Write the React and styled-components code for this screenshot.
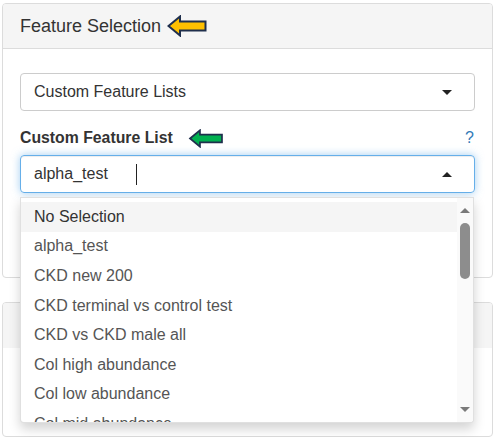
import React from 'react';
import styled, { createGlobalStyle } from 'styled-components';

const GlobalStyle = createGlobalStyle`
  html, body {
    margin: 0;
    padding: 0;
    background: #fff;
  }
  body {
    font-family: "Liberation Sans", Arial, sans-serif;
    color: #333;
  }
`;

const Page = styled.div`
  position: relative;
  padding: 3px 0 0 2px;
  width: 491px;
`;

const Panel = styled.section`
  border: 1px solid #dcdcdc;
  border-radius: 4px;
  background: #fff;
  margin-bottom: ${(p) => p.gap || 0}px;
  height: ${(p) => (p.height ? `${p.height}px` : 'auto')};
  box-sizing: border-box;
  overflow: hidden;
`;

const PanelHeading = styled.div`
  display: flex;
  align-items: center;
  gap: 6px;
  height: 44px;
  padding: 0 17px;
  background: #f5f5f5;
  border-bottom: 1px solid ${(p) => (p.plain ? '#f5f5f5' : '#dcdcdc')};
  font-size: 18px;
  color: #333;
`;

const PanelBody = styled.div`
  display: flex;
  flex-direction: column;
  padding: 24px 17px 84px;
`;

const Select = styled.div`
  display: flex;
  align-items: center;
  justify-content: space-between;
  height: 38px;
  box-sizing: border-box;
  padding: 0 22px 0 13px;
  border: 1px solid ${(p) => (p.focused ? '#66afe9' : '#ccc')};
  border-radius: 4px;
  font-size: 16px;
  color: #333;
  box-shadow: ${(p) =>
    p.focused
      ? 'inset 0 1px 1px rgba(0,0,0,.075), 0 0 8px rgba(102,175,233,.6)'
      : 'none'};
`;

const Caret = styled.span`
  width: 0;
  height: 0;
  border-left: 5px solid transparent;
  border-right: 5px solid transparent;
  ${(p) => (p.up ? 'border-bottom' : 'border-top')}: 5px solid #222;
`;

const Value = styled.span`
  display: flex;
  align-items: center;
`;

const TextCursor = styled.span`
  display: inline-block;
  width: 1px;
  height: 21px;
  margin-left: 28px;
  background: #222;
`;

const LabelRow = styled.div`
  display: flex;
  align-items: center;
  justify-content: space-between;
  margin: 18px 0 8px;
  height: 18px;
`;

const Label = styled.label`
  display: flex;
  align-items: center;
  gap: 14px;
  font-size: 15.8px;
  font-weight: bold;
  color: #333;
`;

const Help = styled.span`
  font-size: 16px;
  color: #337ab7;
  margin-right: 1px;
`;

const Menu = styled.div`
  position: absolute;
  left: 20px;
  top: 197px;
  width: 454px;
  height: 226px;
  box-sizing: border-box;
  display: flex;
  background: #fff;
  border: 1px solid rgba(0, 0, 0, 0.12);
  border-radius: 0 0 4px 4px;
  box-shadow: 0 6px 12px rgba(0, 0, 0, 0.175);
  overflow: hidden;
`;

const Options = styled.ul`
  flex: 1;
  list-style: none;
  margin: 0;
  padding: 4px 0 0;
  overflow: hidden;
`;

const Option = styled.li`
  display: flex;
  align-items: center;
  height: 29.6px;
  padding-left: 13px;
  font-size: 16px;
  color: ${(p) => (p.active ? '#333' : '#555')};
  background: ${(p) => (p.active ? '#f5f5f5' : 'transparent')};
  white-space: nowrap;
`;

const Scrollbar = styled.div`
  width: 16px;
  display: flex;
  flex-direction: column;
  align-items: center;
  background: #fafafa;
  padding: 10px 0 10px;
  box-sizing: border-box;
`;

const ScrollArrow = styled.span`
  width: 0;
  height: 0;
  border-left: 5px solid transparent;
  border-right: 5px solid transparent;
  ${(p) => (p.down ? 'border-top' : 'border-bottom')}: 5px solid #7a7a7a;
  margin-top: ${(p) => (p.down ? 'auto' : '0')};
`;

const Thumb = styled.span`
  width: 10px;
  height: 56px;
  margin-top: 10px;
  border-radius: 5px;
  background: #8d8d8d;
`;

const Arrow = ({ fill, width, height }) => (
  <svg width={width} height={height} viewBox="0 0 40 22">
    <path
      d="M1.5 11 L13 1.5 L13 6.5 L38.5 6.5 L38.5 15.5 L13 15.5 L13 20.5 Z"
      fill={fill}
      stroke="#1f2f4d"
      strokeWidth="2"
      strokeLinejoin="miter"
    />
  </svg>
);

const lists = [
  'No Selection',
  'alpha_test',
  'CKD new 200',
  'CKD terminal vs control test',
  'CKD vs CKD male all',
  'Col high abundance',
  'Col low abundance',
  'Col mid abundance',
];

export default function App() {
  return (
    <>
      <GlobalStyle />
      <Page>
        <Panel gap={24}>
          <PanelHeading>
            Feature Selection
            <Arrow fill="#ffc000" width={40} height={22} />
          </PanelHeading>
          <PanelBody>
            <Select>
              Custom Feature Lists
              <Caret />
            </Select>
            <LabelRow>
              <Label>
                Custom Feature List
                <Arrow fill="#00b050" width={38} height={19} />
              </Label>
              <Help>?</Help>
            </LabelRow>
            <Select focused>
              <Value>
                alpha_test
                <TextCursor />
              </Value>
              <Caret up />
            </Select>
          </PanelBody>
        </Panel>
        <Panel height={135}>
          <PanelHeading plain />
        </Panel>
        <Menu>
          <Options>
            {lists.map((name, i) => (
              <Option key={name} active={i === 0}>
                {name}
              </Option>
            ))}
          </Options>
          <Scrollbar>
            <ScrollArrow />
            <Thumb />
            <ScrollArrow down />
          </Scrollbar>
        </Menu>
      </Page>
    </>
  );
}
